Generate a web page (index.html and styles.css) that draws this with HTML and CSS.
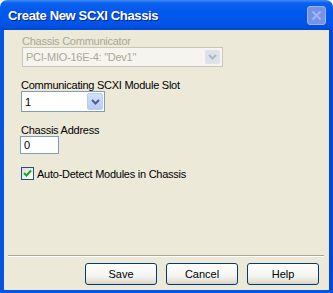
FILE: index.html
```
<!DOCTYPE html>
<html lang="en">
<head>
    <meta charset="UTF-8">
    <title>Create New SCXI Chassis</title>
    <link rel="stylesheet" href="styles.css">
</head>
<body>

<div class="window">
    <div class="titlebar">
        <span class="title">Create New SCXI Chassis</span>
        <span class="close">
            <svg width="11" height="11" viewBox="0 0 11 11">
                <path d="M1.5 1.5 L9.5 9.5 M9.5 1.5 L1.5 9.5" stroke="#a3b6ef" stroke-width="2" fill="none"/>
            </svg>
        </span>
    </div>

    <div class="frame">
        <div class="content">
            <div class="field">
                <label class="disabled">Chassis Communicator</label>
                <div class="combo combo-wide is-disabled">
                    <span class="combo-value">PCI-MIO-16E-4: "Dev1"</span>
                    <span class="combo-arrow">
                        <svg width="9" height="6" viewBox="0 0 9 6"><path d="M1 1 L4.5 4.5 L8 1" stroke="#b2b7c2" stroke-width="2" fill="none"/></svg>
                    </span>
                </div>
            </div>

            <div class="field">
                <label>Communicating SCXI Module Slot</label>
                <div class="combo combo-small">
                    <span class="combo-value">1</span>
                    <span class="combo-arrow">
                        <svg width="9" height="6" viewBox="0 0 9 6"><path d="M1 1 L4.5 4.5 L8 1" stroke="#4d6185" stroke-width="2" fill="none"/></svg>
                    </span>
                </div>
            </div>

            <div class="field">
                <label>Chassis Address</label>
                <div class="textbox">0</div>
            </div>

            <div class="check">
                <span class="checkbox">
                    <svg width="9" height="9" viewBox="0 0 9 9"><path d="M1 4 L3.5 6.5 L8 1.5" stroke="#21a121" stroke-width="2" fill="none"/></svg>
                </span>
                <span>Auto-Detect Modules in Chassis</span>
            </div>
        </div>

        <div class="footer">
            <div class="separator"></div>
            <div class="buttons">
                <button>Save</button>
                <button>Cancel</button>
                <button>Help</button>
            </div>
        </div>
    </div>
</div>

</body>
</html>
```

FILE: styles.css
```
body {
    margin: 0;
    background-color: #ffffff;
    font-family: "Liberation Sans", Arial, sans-serif;
    font-size: 11px;
    letter-spacing: -0.25px;
}
.window {
    width: 333px;
    height: 293px;
    display: flex;
    flex-direction: column;
}
.titlebar {
    height: 30px;
    display: flex;
    align-items: center;
    justify-content: space-between;
    padding: 0 8px 0 8px;
    border-radius: 7px 7px 0 0;
    background: linear-gradient(#3d8ef5 0, #0d60ec 3px, #0058ee 12px, #0055e8 24px, #0048d4 30px);
    box-sizing: border-box;
}
.title {
    color: #ffffff;
    font-weight: bold;
    font-size: 13px;
    letter-spacing: -0.35px;
    text-shadow: 1px 1px 0 #0a1e8c;
    padding-top: 1px;
}
.close {
    width: 19px;
    height: 19px;
    margin-right: -1px;
    display: flex;
    align-items: center;
    justify-content: center;
    border: 1px solid #9fb2ef;
    border-radius: 3px;
    background-color: #7592e6;
    box-sizing: border-box;
}
.frame {
    flex: 1;
    display: flex;
    flex-direction: column;
    background-color: #ece9d8;
    border: 4px solid #0356e6;
    border-top: none;
    border-bottom-width: 3px;
    border-left-color: #0653e2;
    border-right-color: #0247d6;
}
.content {
    padding: 5px 0 0 17px;
}
.field {
    margin-bottom: 12px;
}
.field label {
    display: block;
    line-height: 12px;
    color: #000000;
}
.field label.disabled {
    color: #aca899;
    padding-left: 1px;
}
.combo {
    display: flex;
    align-items: center;
    justify-content: space-between;
    background-color: #ffffff;
    border: 1px solid #7f9db9;
    box-sizing: border-box;
    padding: 0 1px 0 3px;
}
.combo-wide {
    width: 201px;
    height: 20px;
    margin-left: 1px;
}
.combo-small {
    width: 84px;
    height: 21px;
}
.combo.is-disabled {
    background-color: #f5f4ef;
    border-color: #c9c7ba;
    color: #aca899;
    padding-right: 2px;
}
.combo-arrow {
    width: 16px;
    height: 17px;
    display: flex;
    align-items: center;
    justify-content: center;
    border-radius: 2px;
    border: 1px solid #bccdf5;
    background: linear-gradient(#d3e0fd, #b6cbf8);
    box-sizing: border-box;
}
.is-disabled .combo-arrow {
    width: 15px;
    height: 14px;
    border-color: #e0e2e8;
    background: #dde1ea;
}
.textbox {
    width: 39px;
    height: 18px;
    border: 1px solid #7f9db9;
    background-color: #ffffff;
    box-sizing: border-box;
    padding: 2px 0 0 3px;
    margin-left: -1px;
    line-height: 13px;
}
.check {
    display: flex;
    align-items: center;
    gap: 3px;
    margin-top: 13px;
}
.checkbox {
    width: 13px;
    height: 13px;
    border: 1px solid #1c5180;
    background: linear-gradient(135deg, #dcdcd7, #ffffff);
    box-sizing: border-box;
    display: flex;
    align-items: center;
    justify-content: center;
}
.footer {
    margin-top: auto;
    padding: 0 5px 5px 4px;
}
.separator {
    border-top: 1px solid #aca899;
    border-bottom: 1px solid #ffffff;
    margin-bottom: 6px;
}
.buttons {
    display: flex;
    justify-content: flex-end;
    gap: 9px;
    padding-right: 5px;
}
button {
    width: 72px;
    height: 22px;
    font-family: "Liberation Sans", Arial, sans-serif;
    font-size: 11px;
    color: #000000;
    border: 1px solid #003c74;
    border-radius: 3px;
    background: linear-gradient(#ffffff, #f4f4f0 60%, #e3e0d5 90%, #d6d0c5);
    padding: 0;
}
```
